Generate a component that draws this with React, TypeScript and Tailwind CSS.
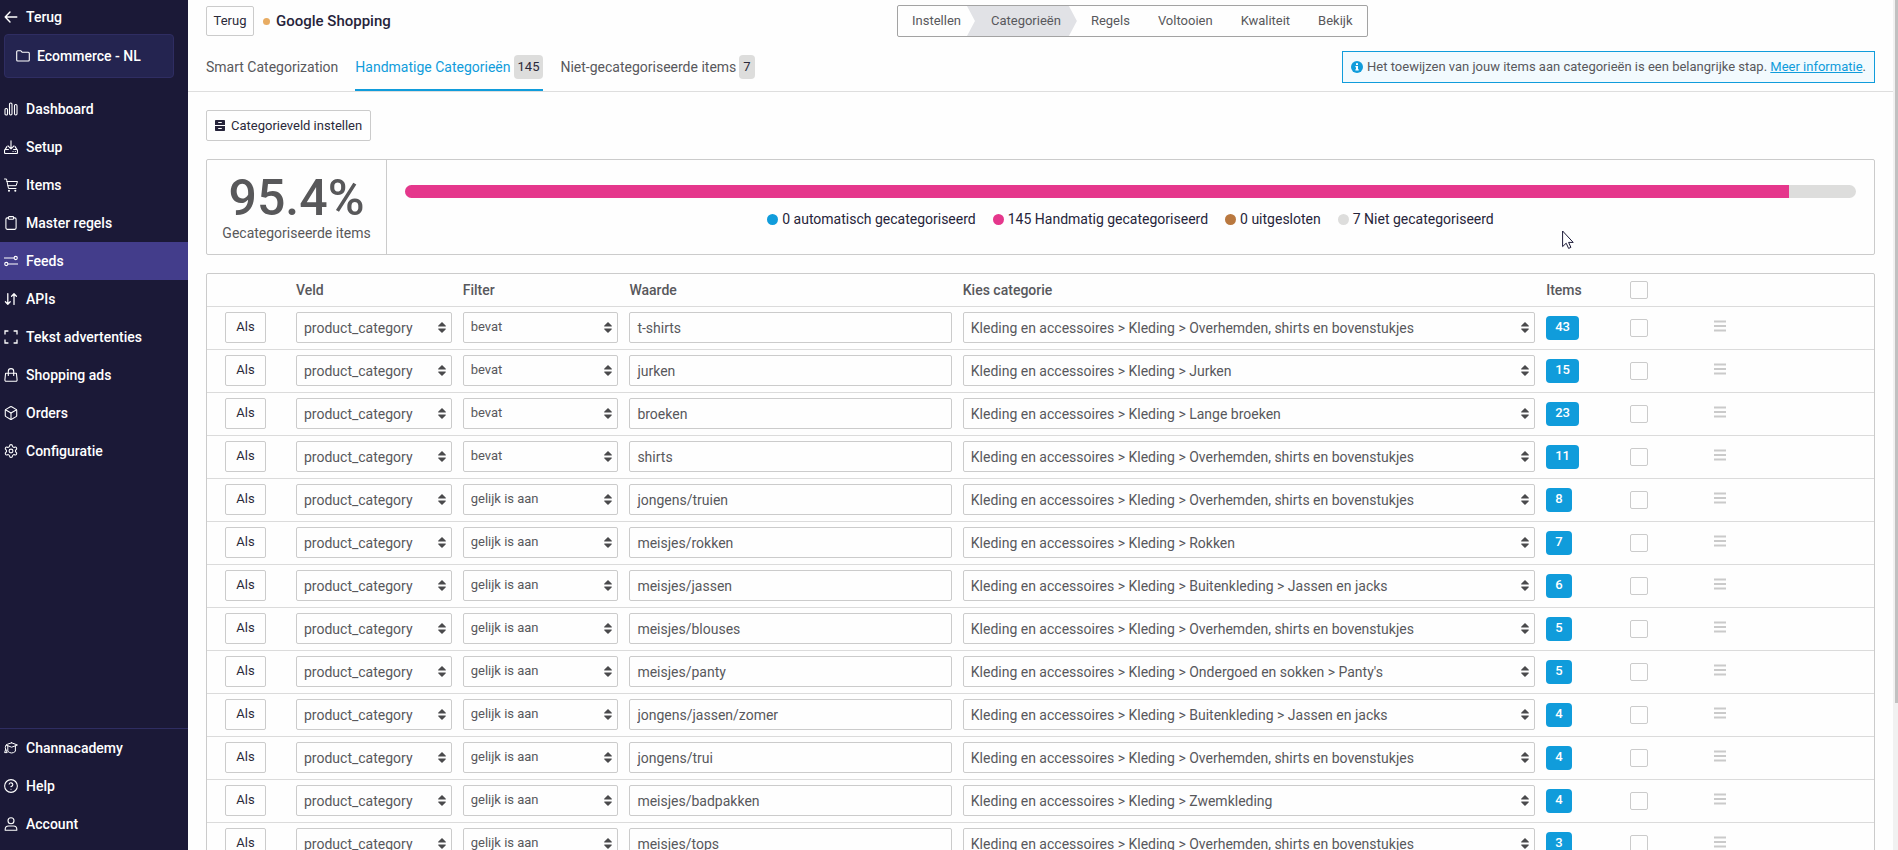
import React from "react";
import { Box, CircleQuestionMark, Clipboard, Settings } from "lucide-react";

type IconProps = { children: React.ReactNode };

function Glyph({ children }: IconProps) {
  return (
    <svg
      viewBox="0 0 14 14"
      className="size-3.5 shrink-0"
      fill="none"
      stroke="currentColor"
      strokeWidth="1.1"
      strokeLinecap="round"
      strokeLinejoin="round"
      aria-hidden="true"
    >
      {children}
    </svg>
  );
}

const BackIcon = () => (
  <Glyph>
    <path d="M12.8 7H1.2M6 2 1.2 7 6 12" strokeWidth="1.4" />
  </Glyph>
);

const FolderIcon = () => (
  <Glyph>
    <path d="M.7 11V2.8q0-1 1-1h3.2l1.4 1.5h6q1 0 1 1V11q0 1-1 1H1.7q-1 0-1-1Z" />
  </Glyph>
);

const BarsIcon = () => (
  <Glyph>
    <rect x="1" y="6.5" width="2.5" height="6.5" rx="1" />
    <rect x="5.5" y="1" width="2.5" height="12" rx="1.2" />
    <rect x="10.5" y="2.5" width="2.5" height="10.5" rx="1.2" />
  </Glyph>
);

const SetupIcon = () => (
  <Glyph>
    <path d="M7 .7v8M4 5.8l3 3 3-3M4.4 9.5H1.5q-1 0-1 1v2q0 1 1 1h11q1 0 1-1v-2q0-1-1-1H9.6M2.9 6.6 1.2 9.4M11.1 6.6l1.7 2.8M9 11.5h.1M11.3 11.5h.1" />
  </Glyph>
);

const CartIcon = () => (
  <Glyph>
    <path d="M.5 1h2l2 9.5h7.5M2.9 3.5h10.6l-1.4 4.2H3.8" strokeWidth="1" />
    <circle cx="5" cy="12.8" r=".5" />
    <circle cx="11.3" cy="12.8" r=".5" />
  </Glyph>
);

const FeedsIcon = () => (
  <Glyph>
    <path d="M.5 4h9.3M4.2 10h9.3" strokeWidth="1.2" />
    <circle cx="11.7" cy="4" r="1.6" />
    <circle cx="2.3" cy="10" r="1.6" />
  </Glyph>
);

const ApisIcon = () => (
  <Glyph>
    <path d="M3.8 1.6v10.6M1.4 9.8l2.4 2.4 2.4-2.4M10 12.4V1.8M7.6 4.2 10 1.8l2.4 2.4" strokeWidth="1.3" />
  </Glyph>
);

const FrameIcon = () => (
  <Glyph>
    <path
      d="M1 4.4V1h3.4M9.6 1H13v3.4M13 9.6V13H9.6M4.4 13H1V9.6"
      strokeWidth="1.3"
      strokeLinecap="butt"
      strokeLinejoin="miter"
    />
  </Glyph>
);

const BagIcon = () => (
  <Glyph>
    <path d="M1.6 5.2h10.8l.7 6.6q.1 1.5-1.3 1.5H2.2q-1.4 0-1.3-1.5ZM4.3 7.4V3.3a2.7 2.7 0 0 1 5.4 0v4.1" />
  </Glyph>
);

const AcademyIcon = () => (
  <Glyph>
    <path
      d="M7.6 1.8 13.4 4 7.6 6.2 2 4Q2.6 3.4 7.6 1.8ZM3.8 5v5.3q3.8 3.4 7.6 0V5M1.8 4.4Q.8 6.6 1.6 8.6M1.6 8.6.6 11.6h2.2Z"
      strokeWidth="1"
    />
  </Glyph>
);

const AccountIcon = () => (
  <Glyph>
    <circle cx="7" cy="3.8" r="3" />
    <path d="M1.2 13.3v-1q0-3.3 3.3-3.3h5q3.3 0 3.3 3.3v1Z" />
  </Glyph>
);

const InfoIcon = () => (
  <svg viewBox="0 0 12 12" className="size-3 shrink-0" aria-hidden="true">
    <circle cx="6" cy="6" r="6" fill="#109cdb" />
    <path d="M5 2.3h2v1.6H5ZM4.4 5H7v3.3h.7v1.2H4.4V8.3H5V6.2h-.6Z" fill="#fff" />
  </svg>
);

const CabinetIcon = () => (
  <svg viewBox="0 0 10 11" className="h-[11px] w-2.5 shrink-0" aria-hidden="true">
    <path d="M.8 0h8.4q.8 0 .8.8V5H0V.8Q0 0 .8 0ZM0 6h10v4.2q0 .8-.8.8H.8q-.8 0-.8-.8Z" fill="#26243a" />
    <path d="M3.2 2.5h3.6M3.2 8.5h3.6" stroke="#fff" strokeWidth="1" />
  </svg>
);

const DragIcon = () => (
  <svg viewBox="0 0 12 12" className="size-3" aria-hidden="true">
    <path d="M0 1.5h12M0 6h12M0 10.5h12" stroke="#cacaca" strokeWidth="1.8" />
  </svg>
);

const outline = { className: "size-3.5 shrink-0", viewBox: "1 1 22 22", strokeWidth: 1.7 };

const menu: { label: string; icon: React.ReactNode; active?: boolean }[] = [
  { label: "Dashboard", icon: <BarsIcon /> },
  { label: "Setup", icon: <SetupIcon /> },
  { label: "Items", icon: <CartIcon /> },
  { label: "Master regels", icon: <Clipboard {...outline} /> },
  { label: "Feeds", icon: <FeedsIcon />, active: true },
  { label: "APIs", icon: <ApisIcon /> },
  { label: "Tekst advertenties", icon: <FrameIcon /> },
  { label: "Shopping ads", icon: <BagIcon /> },
  { label: "Orders", icon: <Box {...outline} /> },
  { label: "Configuratie", icon: <Settings {...outline} /> },
];

const footerMenu = [
  { label: "Channacademy", icon: <AcademyIcon /> },
  { label: "Help", icon: <CircleQuestionMark {...outline} /> },
  { label: "Account", icon: <AccountIcon /> },
];

function MenuLink({ label, icon, active }: { label: string; icon: React.ReactNode; active?: boolean }) {
  return (
    <a
      href="#"
      aria-current={active ? "page" : undefined}
      className={`flex h-[38px] items-center gap-2 pl-1 ${active ? "bg-[#433d8b]" : ""}`}
    >
      {icon}
      {label}
    </a>
  );
}

function Sidebar() {
  return (
    <aside className="flex w-[188px] shrink-0 flex-col bg-[#1b1937] text-sm font-medium text-white">
      <a href="#" className="flex h-[34px] items-center gap-2 pl-1">
        <BackIcon />
        Terug
      </a>
      <a
        href="#"
        className="mx-1 mr-3.5 flex h-11 items-center gap-[7px] rounded border border-[#2f2d62] bg-[#242450] pl-[11px]"
      >
        <FolderIcon />
        Ecommerce - NL
      </a>
      <nav className="mt-3 flex flex-col">
        {menu.map((item) => (
          <MenuLink key={item.label} {...item} />
        ))}
      </nav>
      <nav className="mt-auto flex flex-col border-t border-[#2f2d62] pb-[7px]">
        {footerMenu.map((item) => (
          <MenuLink key={item.label} {...item} />
        ))}
      </nav>
    </aside>
  );
}

function Stepper() {
  return (
    <ol className="flex h-8 items-stretch rounded-xs border border-[#a3a3a3] text-[13px] text-[#58585c]">
      <li className="flex items-center pr-3.5 pl-3.5">Instellen</li>
      <li
        aria-current="step"
        className="-ml-2 flex items-center bg-[#e1e2e6] pr-4 pl-6 [clip-path:polygon(0_0,calc(100%-8px)_0,100%_50%,calc(100%-8px)_100%,0_100%,8px_50%)]"
      >
        Categorieën
      </li>
      <li className="flex items-center px-3.5">Regels</li>
      <li className="flex items-center px-3.5">Voltooien</li>
      <li className="flex items-center px-3.5">Kwaliteit</li>
      <li className="flex items-center px-3.5">Bekijk</li>
    </ol>
  );
}

function TabBadge({ children }: { children: React.ReactNode }) {
  return (
    <span className="flex h-6 items-center rounded bg-[#dddddc] px-1 text-[13px] text-[#2b2a3a]">{children}</span>
  );
}

function Tabs() {
  const base = "flex h-12 items-center gap-[3px]";
  return (
    <div className="flex h-[50px] items-end justify-between border-b border-[#dedede] pr-[18px] pl-[18px]">
      <nav className="flex gap-[17px] text-sm text-[#58585c]">
        <a href="#" className={base}>
          Smart Categorization
        </a>
        <a href="#" aria-current="page" className={`${base} border-b-2 border-[#109cdb] pt-0.5 text-[#109cdb]`}>
          Handmatige Categorieën
          <TabBadge>145</TabBadge>
        </a>
        <a href="#" className={base}>
          Niet-gecategoriseerde items
          <TabBadge>7</TabBadge>
        </a>
      </nav>
      <p className="mb-2 flex h-8 items-center gap-1 border border-[#109cdb] bg-[#f2fafe] px-2 text-[13px] text-[#58585c]">
        <InfoIcon />
        <span>
          Het toewijzen van jouw items aan categorieën is een belangrijke stap.{" "}
          <a href="#" className="text-[#109cdb] underline">
            Meer informatie
          </a>
          .
        </span>
      </p>
    </div>
  );
}

const legend = [
  { label: "0 automatisch gecategoriseerd", dot: "bg-[#109cdb]" },
  { label: "145 Handmatig gecategoriseerd", dot: "bg-[#e5378c]" },
  { label: "0 uitgesloten", dot: "bg-[#b9783f]" },
  { label: "7 Niet gecategoriseerd", dot: "bg-[#dddddc]" },
];

function Summary() {
  const categorised = 145;
  const open = 7;
  return (
    <section className="mt-[18px] flex h-24 rounded-xs border border-[#cbcbcb]">
      <div className="flex w-[180px] shrink-0 flex-col items-center border-r border-[#cbcbcb] pt-3 text-[#58585a]">
        <strong className="text-[50px] leading-[52px] font-medium">95.4%</strong>
        <span className="text-sm leading-[18px]">Gecategoriseerde items</span>
      </div>
      <div className="flex-1 px-[18px] pt-[25px]">
        <div className="flex h-[13px] overflow-hidden rounded-full bg-[#dddddc]">
          <div className="bg-[#e5378c]" style={{ width: `${(categorised / (categorised + open)) * 100}%` }} />
        </div>
        <ul className="mt-[11px] flex justify-center gap-[17px] text-sm text-[#26243a]">
          {legend.map((entry) => (
            <li key={entry.label} className="flex items-center gap-1">
              <span className={`size-[11px] rounded-full ${entry.dot}`} />
              {entry.label}
            </li>
          ))}
        </ul>
      </div>
    </section>
  );
}

function SelectBox({ label, value, small }: { label: string; value: string; small?: boolean }) {
  return (
    <div className="grid">
      <select
        aria-label={label}
        defaultValue={value}
        className={`col-start-1 row-start-1 h-[31px] w-full min-w-0 appearance-none rounded-xs border border-[#cbcbcb] bg-[#fefefe] pr-6 pl-[7px] text-[#58585c] ${
          small ? "text-[13px]" : "text-sm"
        }`}
      >
        <option>{value}</option>
      </select>
      <svg
        viewBox="0 0 8 11"
        className="pointer-events-none col-start-1 row-start-1 mr-1.5 h-[11px] w-2 self-center justify-self-end"
        fill="#4a4a4c"
        aria-hidden="true"
      >
        <path d="M4 0 7.6 3.6Q8.2 4.6 7.3 4.6H.7Q-.2 4.6.4 3.6ZM4 11 7.6 7.4Q8.2 6.4 7.3 6.4H.7Q-.2 6.4.4 7.4Z" />
      </svg>
    </div>
  );
}

const root = "Kleding en accessoires > Kleding > ";
const rules = [
  { filter: "bevat", value: "t-shirts", category: "Overhemden, shirts en bovenstukjes", items: 43 },
  { filter: "bevat", value: "jurken", category: "Jurken", items: 15 },
  { filter: "bevat", value: "broeken", category: "Lange broeken", items: 23 },
  { filter: "bevat", value: "shirts", category: "Overhemden, shirts en bovenstukjes", items: 11 },
  { filter: "gelijk is aan", value: "jongens/truien", category: "Overhemden, shirts en bovenstukjes", items: 8 },
  { filter: "gelijk is aan", value: "meisjes/rokken", category: "Rokken", items: 7 },
  { filter: "gelijk is aan", value: "meisjes/jassen", category: "Buitenkleding > Jassen en jacks", items: 6 },
  { filter: "gelijk is aan", value: "meisjes/blouses", category: "Overhemden, shirts en bovenstukjes", items: 5 },
  { filter: "gelijk is aan", value: "meisjes/panty", category: "Ondergoed en sokken > Panty's", items: 5 },
  { filter: "gelijk is aan", value: "jongens/jassen/zomer", category: "Buitenkleding > Jassen en jacks", items: 4 },
  { filter: "gelijk is aan", value: "jongens/trui", category: "Overhemden, shirts en bovenstukjes", items: 4 },
  { filter: "gelijk is aan", value: "meisjes/badpakken", category: "Zwemkleding", items: 4 },
  { filter: "gelijk is aan", value: "meisjes/tops", category: "Overhemden, shirts en bovenstukjes", items: 3 },
];

const checkbox = "block size-[18px] appearance-none rounded-xs border border-[#cbcbcb] bg-[#fefefe] checked:bg-[#109cdb]";

function RulesTable() {
  return (
    <div className="mt-[18px] rounded-xs border border-[#cbcbcb]">
      <table className="w-full table-fixed text-left text-sm text-[#58585c]">
        <thead>
          <tr className="h-8">
            <th className="w-[89px]" aria-label="Voorwaarde" />
            <th className="w-[10%] font-medium">Veld</th>
            <th className="w-[10%] font-medium">Filter</th>
            <th className="w-[20%] font-medium">Waarde</th>
            <th className="w-[35%] font-medium">Kies categorie</th>
            <th className="w-[5%] font-medium">Items</th>
            <th className="w-[5%]">
              <input type="checkbox" aria-label="Alles selecteren" className={checkbox} />
            </th>
            <th aria-label="Volgorde" />
          </tr>
        </thead>
        <tbody>
          {rules.map((rule) => (
            <tr key={rule.value} className="h-[43px] border-t border-[#dbdbdb]">
              <td className="pl-[18px]">
                <button
                  type="button"
                  className="h-[31px] w-[41px] rounded-xs border border-[#cbcbcb] text-[13px] text-[#2b2a3a]"
                >
                  Als
                </button>
              </td>
              <td className="pr-[11px]">
                <SelectBox label="Veld" value="product_category" />
              </td>
              <td className="pr-[11px]">
                <SelectBox label="Filter" value={rule.filter} small />
              </td>
              <td className="pr-[11px]">
                <input
                  type="text"
                  aria-label="Waarde"
                  defaultValue={rule.value}
                  className="block h-[31px] w-full rounded-xs border border-[#cbcbcb] bg-[#fefefe] px-[7px]"
                />
              </td>
              <td className="pr-[11px]">
                <SelectBox label="Kies categorie" value={root + rule.category} />
              </td>
              <td>
                <span className="inline-flex h-6 items-center rounded bg-[#109cdb] px-[9px] align-middle text-[13px] font-medium text-white">
                  {rule.items}
                </span>
              </td>
              <td>
                <input type="checkbox" aria-label={`Selecteer ${rule.value}`} className={checkbox} />
              </td>
              <td>
                <button type="button" aria-label={`Verplaats ${rule.value}`} className="block px-px pb-1">
                  <DragIcon />
                </button>
              </td>
            </tr>
          ))}
        </tbody>
      </table>
    </div>
  );
}

function Pointer() {
  return (
    <svg viewBox="0 0 12 19" className="pointer-events-none absolute top-[230px] left-[1562px] h-[19px] w-3" aria-hidden="true">
      <path d="M.6 1v15.6L4.2 13.2l2.4 5.2 2.3-1-2.3-5H11.2Z" fill="#fff" stroke="#1b1937" strokeWidth="1" />
    </svg>
  );
}

export default function App() {
  return (
    <div className="relative flex h-screen overflow-hidden bg-[#fefefe] font-[Roboto,sans-serif]">
      <Sidebar />
      <main className="min-w-0 flex-1 overflow-hidden">
        <header className="flex h-[42px] items-start pt-[5px]">
          <div className="flex h-8 w-[709px] items-center pl-[18px]">
            <button
              type="button"
              className="h-[30px] w-12 rounded-xs border border-[#cbcbcb] text-[13px] text-[#2b2a3a]"
            >
              Terug
            </button>
            <span className="ml-[9px] size-[7px] rounded-full bg-[#e8ac63]" />
            <h1 className="ml-1.5 text-[15px] font-medium text-[#26243a]">Google Shopping</h1>
          </div>
          <Stepper />
        </header>
        <Tabs />
        <div className="px-[18px] pt-[18px]">
          <button
            type="button"
            className="flex h-[31px] items-center gap-1.5 rounded-xs border border-[#cbcbcb] px-2 text-[13px] text-[#2b2a3a]"
          >
            <CabinetIcon />
            Categorieveld instellen
          </button>
          <Summary />
          <RulesTable />
        </div>
      </main>
      <div className="w-[5px] shrink-0 bg-[#f1f1f1] pl-0.5" aria-hidden="true">
        <div className="h-[703px] bg-[#c1c1c1]" />
      </div>
      <Pointer />
    </div>
  );
}
